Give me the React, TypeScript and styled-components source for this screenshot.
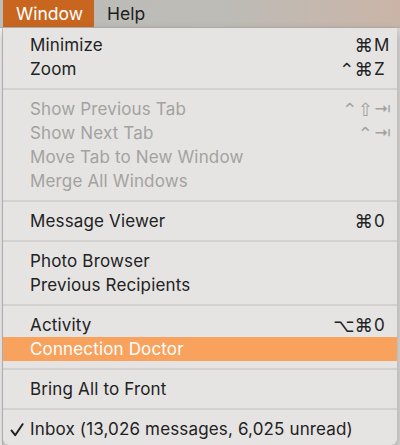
import styled, { createGlobalStyle } from 'styled-components'

type Item =
  | { kind: 'sep' }
  | {
      kind: 'item'
      label: string
      mods?: string
      keyChar?: string
      disabled?: boolean
      active?: boolean
      checked?: boolean
    }

const items: Item[] = [
  { kind: 'item', label: 'Minimize', mods: '⌘', keyChar: 'M' },
  { kind: 'item', label: 'Zoom', mods: '⌃⌘', keyChar: 'Z' },
  { kind: 'sep' },
  { kind: 'item', label: 'Show Previous Tab', mods: '⌃⇧', keyChar: '⇥', disabled: true },
  { kind: 'item', label: 'Show Next Tab', mods: '⌃', keyChar: '⇥', disabled: true },
  { kind: 'item', label: 'Move Tab to New Window', disabled: true },
  { kind: 'item', label: 'Merge All Windows', disabled: true },
  { kind: 'sep' },
  { kind: 'item', label: 'Message Viewer', mods: '⌘', keyChar: '0' },
  { kind: 'sep' },
  { kind: 'item', label: 'Photo Browser' },
  { kind: 'item', label: 'Previous Recipients' },
  { kind: 'sep' },
  { kind: 'item', label: 'Activity', mods: '⌥⌘', keyChar: '0' },
  { kind: 'item', label: 'Connection Doctor', active: true },
  { kind: 'sep' },
  { kind: 'item', label: 'Bring All to Front' },
  { kind: 'sep' },
  { kind: 'item', label: 'Inbox (13,026 messages, 6,025 unread)', checked: true },
]

const CheckIcon = () => (
  <svg width="14" height="14" viewBox="0 0 14 14">
    <path
      d="M1.6 7.6 L5.2 12.2 L12.6 1.2"
      fill="none"
      stroke="currentColor"
      strokeWidth="2"
      strokeLinecap="round"
      strokeLinejoin="round"
    />
  </svg>
)

export default function App() {
  return (
    <>
      <GlobalStyle />
      <Screen>
        <MenuBar>
          <MenuTitle $open>Window</MenuTitle>
          <MenuTitle>Help</MenuTitle>
        </MenuBar>
        <Body>
          <BehindWindow />
          <MenuPanel>
            {items.map((item, i) =>
              item.kind === 'sep' ? (
                <Separator key={i} />
              ) : (
                <MenuItem key={i} $disabled={item.disabled} $active={item.active}>
                  <Check>{item.checked && <CheckIcon />}</Check>
                  <Label>{item.label}</Label>
                  {item.keyChar && (
                    <Shortcut>
                      <Mods>{item.mods}</Mods>
                      <KeyChar>{item.keyChar}</KeyChar>
                    </Shortcut>
                  )}
                </MenuItem>
              )
            )}
          </MenuPanel>
        </Body>
      </Screen>
    </>
  )
}

const GlobalStyle = createGlobalStyle`
  html, body {
    margin: 0;
    padding: 0;
    background: #d9d8d6;
  }
  body {
    font-family: Inter, "Liberation Sans", "DejaVu Sans", sans-serif;
  }
`

const Screen = styled('div')`
  display: flex;
  flex-direction: column;
  width: 400px;
  height: 445px;
  overflow: hidden;
`

const MenuBar = styled('div')`
  display: flex;
  align-items: stretch;
  height: 28px;
  padding-left: 3px;
  background: linear-gradient(90deg, #bcbcb8 0%, #bdbcb7 55%, #cab4a7 100%);
  border-bottom: 1px solid #b1b0ac;
  box-sizing: border-box;
`

const MenuTitle = styled('div')<{ $open?: boolean }>`
  display: flex;
  align-items: center;
  padding: 0 11px 0 13px;
  font-size: 17.5px;
  color: ${(p) => (p.$open ? '#ffffff' : '#1c1c1c')};
  background: ${(p) => (p.$open ? '#c8661f' : 'transparent')};
`

const Body = styled('div')`
  display: flex;
  flex: 1;
  min-height: 0;
`

const BehindWindow = styled('div')`
  width: 2px;
  background: #f1f1f1;
  border-right: 1px solid #c2c2c2;
`

const MenuPanel = styled('div')`
  display: flex;
  flex-direction: column;
  width: 394px;
  padding-top: 5px;
  background: #e5e4e2;
  border-radius: 0 0 6px 6px;
  box-shadow: 0 4px 10px rgba(0, 0, 0, 0.25);
`

const MenuItem = styled('div')<{ $disabled?: boolean; $active?: boolean }>`
  display: flex;
  align-items: center;
  height: 24px;
  flex-shrink: 0;
  padding: 0 7px 0 7px;
  font-size: 17px;
  letter-spacing: 0.15px;
  color: ${(p) => (p.$active ? '#ffffff' : p.$disabled ? '#a3a2a0' : '#222222')};
  background: ${(p) => (p.$active ? '#f9a25d' : 'transparent')};
`

const Check = styled('span')`
  display: flex;
  align-items: center;
  width: 20px;
  padding-top: 1px;
`

const Label = styled('span')`
  flex: 1;
  white-space: nowrap;
`

const Shortcut = styled('span')`
  display: flex;
  align-items: center;
`

const Mods = styled('span')`
  font-family: "DejaVu Sans", sans-serif;
  font-size: 18.5px;
  letter-spacing: 0;
  text-align: right;
`

const KeyChar = styled('span')`
  width: 16px;
  padding-left: 1px;
  font-family: Inter, "DejaVu Sans", sans-serif;
`

const Separator = styled('div')`
  height: 2px;
  margin: 7px 0;
  flex-shrink: 0;
  background: #d2d1cf;
`
